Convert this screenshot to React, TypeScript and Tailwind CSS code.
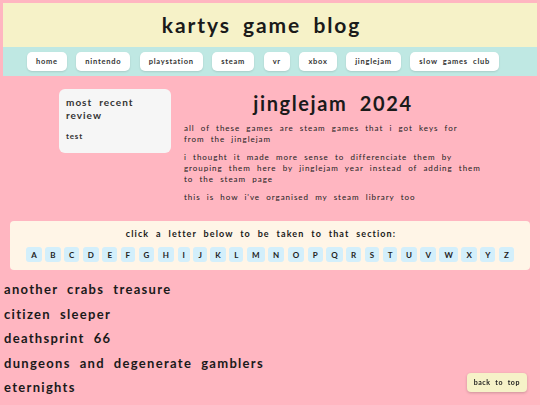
const navItems = ['home', 'nintendo', 'playstation', 'steam', 'vr', 'xbox', 'jinglejam', 'slow games club'];
const letters = 'ABCDEFGHIJKLMNOPQRSTUVWXYZ'.split('');
const games = ['another crabs treasure', 'citizen sleeper', 'deathsprint 66', 'dungeons and degenerate gamblers', 'eternights'];

export default function App() {
  return (
    <div
      className="min-h-[405px] bg-[#ffb6c1] text-[#1a1a1a] pt-[3px]"
      style={{ fontFamily: 'Lato, "Noto Sans", sans-serif' }}
    >
      {/* header */}
      <header className="mx-[3px] bg-[#f6f2c8] h-[44px] flex items-center justify-center pr-[17px]">
        <h1 className="text-[21px] font-bold tracking-[0.09em] [word-spacing:0.25em]">kartys game blog</h1>
      </header>

      {/* nav */}
      <nav className="mx-[3px] bg-[#bfe8e3] h-[29px] flex items-center justify-center gap-[9.5px] pr-[14px]">
        {navItems.map((item) => (
          <a
            key={item}
            className="bg-white rounded-[5px] h-[19px] px-[9px] flex items-center text-[7.5px] font-bold tracking-[0.1em] [word-spacing:0.35em] text-[#333] shadow-[0_1px_2px_rgba(0,0,0,0.12)]"
          >
            {item}
          </a>
        ))}
      </nav>

      {/* intro */}
      <div className="flex pl-[59px] pt-[13px] gap-[13px]">
        <aside className="w-[112px] h-[64px] bg-[#f6f6f6] rounded-[6px] px-[7px] pt-[7px] shrink-0">
          <h2 className="text-[10px] font-bold leading-[13px] tracking-[0.1em] [word-spacing:0.35em] text-[#333]">
            most recent review
          </h2>
          <p className="text-[8px] font-bold mt-[8px] tracking-[0.1em] text-[#333]">test</p>
        </aside>
        <main className="w-[304px]">
          <h2 className="text-center text-[20px] font-bold tracking-[0.08em] [word-spacing:0.3em] leading-[24px] pt-[2px] pr-[6px]">
            jinglejam 2024
          </h2>
          <div className="mt-[8px] space-y-[7px] text-[8px] leading-[11px] tracking-[0.12em] [word-spacing:0.4em] text-[#222]">
            <p className="pr-[8px]">all of these games are steam games that i got keys for from the jinglejam</p>
            <p>i thought it made more sense to differenciate them by grouping them here by jinglejam year instead of adding them to the steam page</p>
            <p>this is how i've organised my steam library too</p>
          </div>
        </main>
      </div>

      {/* letter index */}
      <section className="mx-[10px] mt-[18px] bg-[#fff5e7] rounded-[4px] pt-[7px] pb-[8px]">
        <p className="text-center text-[9px] font-bold tracking-[0.12em] [word-spacing:0.4em] leading-[12px] pr-[18px]">
          click a letter below to be taken to that section:
        </p>
        <div className="flex justify-center gap-[3.5px] mt-[7px]">
          {letters.map((l) => (
            <a
              key={l}
              className="bg-[#d3effb] rounded-[3px] h-[15px] px-[5px] flex items-center text-[8px] font-bold text-[#222]"
            >
              {l}
            </a>
          ))}
        </div>
      </section>

      {/* games */}
      <div className="px-[4px] mt-[7px]">
        {games.map((g) => (
          <h3
            key={g}
            className="text-[13px] font-bold leading-[24.5px] tracking-[0.1em] [word-spacing:0.35em]"
          >
            {g}
          </h3>
        ))}
      </div>

      <a className="fixed right-[13px] bottom-[13px] bg-[#f6f2c8] rounded-[4px] h-[19px] px-[7px] flex items-center text-[7px] font-bold tracking-[0.08em] [word-spacing:0.35em] shadow-[0_1px_3px_rgba(0,0,0,0.2)]">
        back to top
      </a>
    </div>
  );
}
